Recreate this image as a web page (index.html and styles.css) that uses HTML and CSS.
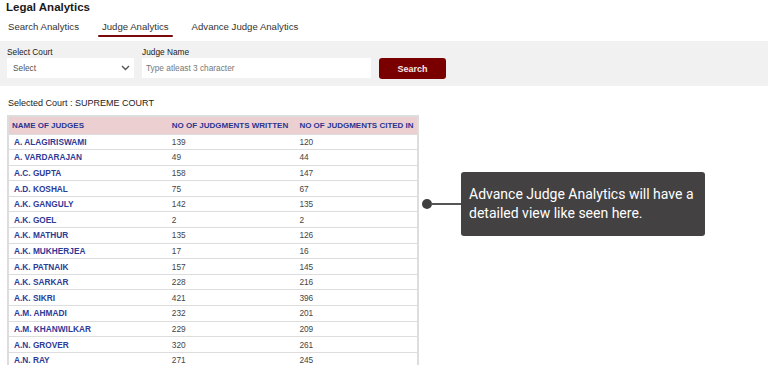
FILE: index.html
```html
<!DOCTYPE html>
<html>
<head>
<meta charset="utf-8">
<link rel="stylesheet" href="styles.css">
</head>
<body>
<div class="page">
  <h1 class="title">Legal Analytics</h1>
  <nav class="tabs">
    <span class="tab">Search Analytics</span>
    <span class="tab active">Judge Analytics</span>
    <span class="tab">Advance Judge Analytics</span>
  </nav>
  <div class="filters">
    <div class="field court">
      <label>Select Court</label>
      <div class="select"><span>Select</span>
        <svg width="9" height="6" viewBox="0 0 9 6"><path d="M1 1l3.5 3.5L8 1" fill="none" stroke="#555" stroke-width="1.4"/></svg>
      </div>
    </div>
    <div class="field judge">
      <label>Judge Name</label>
      <div class="input">Type atleast 3 character</div>
    </div>
    <button class="search">Search</button>
  </div>
  <div class="content">
    <p class="selected">Selected Court : SUPREME COURT</p>
    <div class="main">
      <table class="judges">
        <colgroup><col class="c1"><col class="c2"><col class="c3"></colgroup>
        <thead>
          <tr><th>NAME OF JUDGES</th><th>NO OF JUDGMENTS WRITTEN</th><th>NO OF JUDGMENTS CITED IN</th></tr>
        </thead>
        <tbody>
          <tr><td>A. ALAGIRISWAMI</td><td>139</td><td>120</td></tr>
          <tr><td>A. VARDARAJAN</td><td>49</td><td>44</td></tr>
          <tr><td>A.C. GUPTA</td><td>158</td><td>147</td></tr>
          <tr><td>A.D. KOSHAL</td><td>75</td><td>67</td></tr>
          <tr><td>A.K. GANGULY</td><td>142</td><td>135</td></tr>
          <tr><td>A.K. GOEL</td><td>2</td><td>2</td></tr>
          <tr><td>A.K. MATHUR</td><td>135</td><td>126</td></tr>
          <tr><td>A.K. MUKHERJEA</td><td>17</td><td>16</td></tr>
          <tr><td>A.K. PATNAIK</td><td>157</td><td>145</td></tr>
          <tr><td>A.K. SARKAR</td><td>228</td><td>216</td></tr>
          <tr><td>A.K. SIKRI</td><td>421</td><td>396</td></tr>
          <tr><td>A.M. AHMADI</td><td>232</td><td>201</td></tr>
          <tr><td>A.M. KHANWILKAR</td><td>229</td><td>209</td></tr>
          <tr><td>A.N. GROVER</td><td>320</td><td>261</td></tr>
          <tr><td>A.N. RAY</td><td>271</td><td>245</td></tr>
        </tbody>
      </table>
      <div class="callout">
        <span class="dot"></span><span class="line"></span>
        <div class="tip">Advance Judge Analytics will have a detailed view like seen here.</div>
      </div>
    </div>
  </div>
</div>
</body>
</html>
```
FILE: styles.css
```css
* { box-sizing: border-box; }
html, body { margin: 0; padding: 0; background: #fff; overflow: hidden; }
body { font-family: "Liberation Sans", Arial, sans-serif; color: #222; width: 768px; height: 365px; }
.title { margin: 0; padding: 0 0 0 6px; font-size: 11.5px; line-height: 14px; font-weight: bold; color: #1a1a1a; }
.tabs { display: flex; gap: 15px; padding: 6px 0 0 4px; height: 27px; }
.tab { font-size: 9.6px; line-height: 14px; color: #333; padding: 0 4px; height: 17px; position: relative; }
.tab.active::after { content: ""; position: absolute; left: 0; right: 0; bottom: 0; height: 2px; border-radius: 2px; background: #7a0a0a; }
.filters { background: #f1f1f1; height: 45px; display: flex; align-items: flex-start; padding: 6px 0 0 7px; }
.field { display: flex; flex-direction: column; }
.field label { font-size: 8.3px; line-height: 10px; color: #222; height: 11px; }
.select, .input { background: #fff; height: 20px; font-size: 8.3px; color: #555; display: flex; align-items: center; }
.court .select { width: 127px; padding: 0 4px 0 6px; justify-content: space-between; }
.judge { margin-left: 8px; }
.judge .input { width: 229px; padding-left: 4px; color: #777; }
.search { margin: 11px 0 0 8px; width: 67px; height: 21px; border: none; border-radius: 3px; background: #7a0000; color: #f5e6e6; font-family: "Liberation Sans", Arial, sans-serif; font-size: 9px; font-weight: bold; padding: 0; }
.content { padding: 11px 0 0 7px; }
.selected { margin: 0 0 0 1px; font-size: 9px; line-height: 12px; color: #222; }
.main { display: flex; align-items: flex-start; margin-top: 6px; }
.judges { width: 412px; table-layout: fixed; border-collapse: collapse; border: 2px solid #ddd; border-bottom: none; font-size: 8.3px; }
.c1 { width: 160px; }
.c2 { width: 127px; }
.c3 { width: 121px; }
.judges th { background: #ecd0d1; color: #2a3592; font-size: 8px; font-weight: bold; text-align: left; height: 18px; padding: 0 0 0 3px; white-space: nowrap; overflow: hidden; border-bottom: 1px solid #ddd; }
.judges td { height: 15.6px; padding: 0 0 0 3px; color: #444; border-bottom: 1px solid #ddd; }
.judges td:first-child { color: #2e3b97; font-weight: bold; padding-left: 5px; }
.callout { display: flex; align-items: center; margin-top: 57px; margin-left: 3px; }
.dot { width: 10px; height: 10px; border-radius: 50%; background: #3e3e3e; }
.line { width: 30px; height: 2px; background: #555; margin-left: -1px; }
.tip { width: 244px; height: 64px; background: #434142; color: #fff; border-radius: 3px; font-family: Roboto, "Liberation Sans", sans-serif; font-size: 14px; line-height: 19px; padding: 13px 8px 0 8px; }
```
